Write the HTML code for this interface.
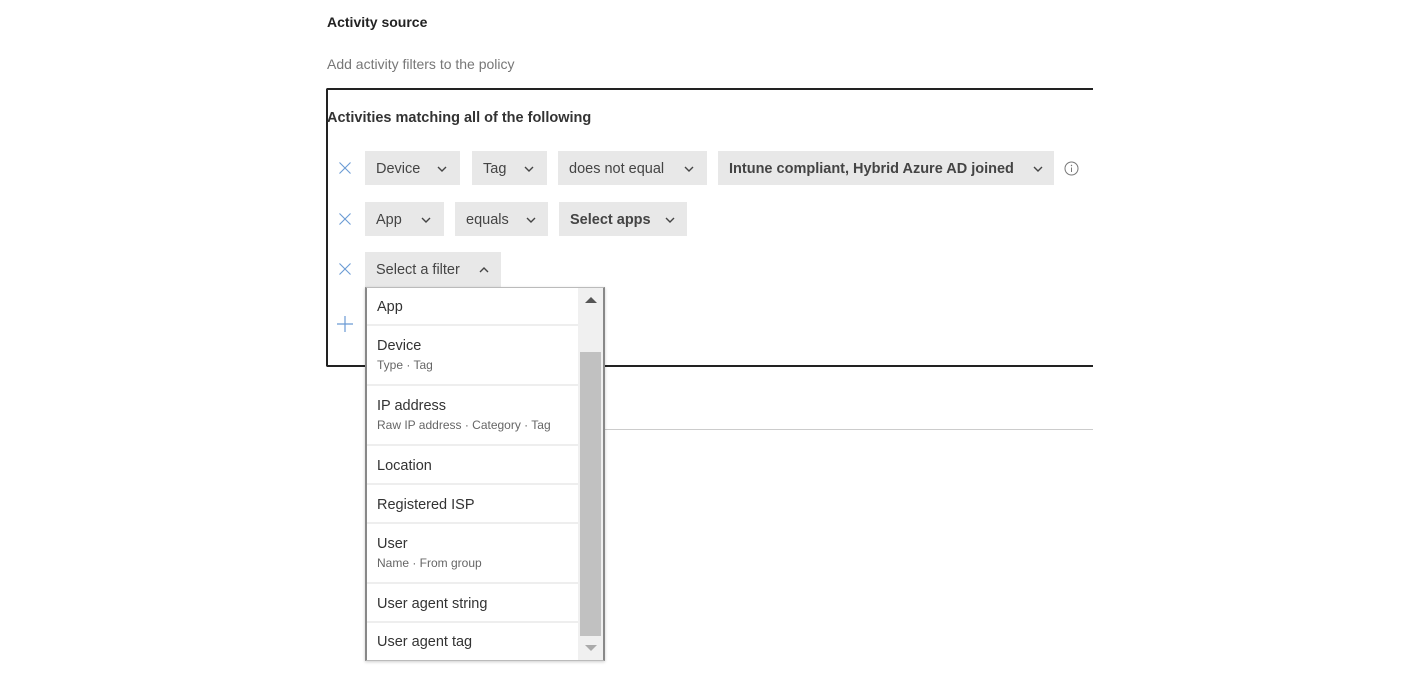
<!DOCTYPE html>
<html><head><style>
body{margin:0;width:1411px;height:681px;background:#fff;font-family:"Liberation Sans",sans-serif;color:#333;position:relative;overflow:hidden}
.a{position:absolute}
.chip{position:absolute;background:#e8e8e8;height:34px;line-height:36px;font-size:14.5px;padding-left:11px;box-sizing:border-box;color:#444}
.chip svg{position:absolute;top:14px}
.x{position:absolute;left:338px;width:14px;height:14px}
.dd{position:absolute;left:365px;top:287px;width:240px;height:374px;border:1px solid #bbb;border-left:2px solid #888;border-right:2px solid #888;box-sizing:border-box;background:#fff;box-shadow:0 1px 3px rgba(0,0,0,.2)}
.it{position:absolute;left:0;width:211px;border-bottom:2px solid #eee;box-sizing:border-box;padding-left:10px;font-size:14.5px;color:#333}
.it small{display:block;font-size:12px;color:#666;margin-top:4px}
</style></head><body>
<div class="a" style="left:327px;top:14px;font-size:14px;font-weight:bold;color:#222">Activity source</div>
<div class="a" style="left:327px;top:56px;font-size:14px;color:#777">Add activity filters to the policy</div>
<div class="a" style="left:326px;top:88px;width:780px;height:279px;border:2px solid #222;border-right:none;box-sizing:border-box;border-radius:2px 0 0 2px"></div>
<div class="a" style="left:1093px;top:80px;width:30px;height:300px;background:#fff"></div>
<div class="a" style="left:327px;top:110px;font-size:14.5px;font-weight:bold;color:#333">Activities matching all of the following</div>
<div class="a" style="left:605px;top:429px;width:488px;height:1px;background:#ccc"></div>

<svg class="x" style="top:161px" viewBox="0 0 14 14"><path d="M1.5 1.5L12.5 12.5M12.5 1.5L1.5 12.5" stroke="#6a9ad4" stroke-width="1.1"/></svg>
<svg class="x" style="top:212px" viewBox="0 0 14 14"><path d="M1.5 1.5L12.5 12.5M12.5 1.5L1.5 12.5" stroke="#6a9ad4" stroke-width="1.1"/></svg>
<svg class="x" style="top:262px" viewBox="0 0 14 14"><path d="M1.5 1.5L12.5 12.5M12.5 1.5L1.5 12.5" stroke="#6a9ad4" stroke-width="1.1"/></svg>
<svg class="a" style="left:336px;top:315px" width="18" height="18" viewBox="0 0 18 18"><path d="M9 1V17M1 9H17" stroke="#6a9ad4" stroke-width="1.2"/></svg>

<div class="chip" style="left:365px;top:151px;width:95px">Device<svg style="left:72px" width="10" height="8" viewBox="0 0 10 8"><path d="M1 2L5 6L9 2" fill="none" stroke="#444" stroke-width="1.4"/></svg></div>
<div class="chip" style="left:472px;top:151px;width:75px">Tag<svg style="left:52px" width="10" height="8" viewBox="0 0 10 8"><path d="M1 2L5 6L9 2" fill="none" stroke="#444" stroke-width="1.4"/></svg></div>
<div class="chip" style="left:558px;top:151px;width:149px">does not equal<svg style="left:126px" width="10" height="8" viewBox="0 0 10 8"><path d="M1 2L5 6L9 2" fill="none" stroke="#444" stroke-width="1.4"/></svg></div>
<div class="chip" style="left:718px;top:151px;width:336px;font-weight:bold">Intune compliant, Hybrid Azure AD joined<svg style="left:315px" width="10" height="8" viewBox="0 0 10 8"><path d="M1 2L5 6L9 2" fill="none" stroke="#444" stroke-width="1.4"/></svg></div>
<svg class="a" style="left:1064px;top:161px" width="15" height="15" viewBox="0 0 15 15"><circle cx="7.5" cy="7.5" r="6.5" fill="none" stroke="#777"/><path d="M7.5 6.5V11" stroke="#777"/><circle cx="7.5" cy="4.5" r=".7" fill="#777"/></svg>

<div class="chip" style="left:365px;top:202px;width:79px">App<svg style="left:56px" width="10" height="8" viewBox="0 0 10 8"><path d="M1 2L5 6L9 2" fill="none" stroke="#444" stroke-width="1.4"/></svg></div>
<div class="chip" style="left:455px;top:202px;width:93px">equals<svg style="left:71px" width="10" height="8" viewBox="0 0 10 8"><path d="M1 2L5 6L9 2" fill="none" stroke="#444" stroke-width="1.4"/></svg></div>
<div class="chip" style="left:559px;top:202px;width:128px;font-weight:bold">Select apps<svg style="left:106px" width="10" height="8" viewBox="0 0 10 8"><path d="M1 2L5 6L9 2" fill="none" stroke="#444" stroke-width="1.4"/></svg></div>

<div class="chip" style="left:365px;top:252px;width:136px;height:35px">Select a filter<svg style="left:114px" width="10" height="8" viewBox="0 0 10 8"><path d="M1 6L5 2L9 6" fill="none" stroke="#444" stroke-width="1.4"/></svg></div>

<div class="dd">
<div class="it" style="top:0;height:38px;line-height:39px">App</div>
<div class="it" style="top:38px;height:60px;padding-top:12px">Device<small>Type · Tag</small></div>
<div class="it" style="top:98px;height:60px;padding-top:12px">IP address<small>Raw IP address · Category · Tag</small></div>
<div class="it" style="top:158px;height:39px;line-height:40px">Location</div>
<div class="it" style="top:197px;height:39px;line-height:40px">Registered ISP</div>
<div class="it" style="top:236px;height:60px;padding-top:12px">User<small>Name · From group</small></div>
<div class="it" style="top:296px;height:39px;line-height:40px">User agent string</div>
<div class="it" style="top:335px;height:38px;line-height:39px;border:none">User agent tag</div>
<div class="a" style="left:211px;top:0;width:25px;height:372px;background:#f0f0f0"></div>
<div class="a" style="left:213px;top:64px;width:21px;height:284px;background:#c1c1c1"></div>
<svg class="a" style="left:217px;top:8px" width="14" height="8" viewBox="0 0 14 8"><path d="M1 7L7 1L13 7Z" fill="#555"/></svg>
<svg class="a" style="left:217px;top:356px" width="14" height="8" viewBox="0 0 14 8"><path d="M1 1L7 7L13 1Z" fill="#aaa"/></svg>
</div>
</body></html>
